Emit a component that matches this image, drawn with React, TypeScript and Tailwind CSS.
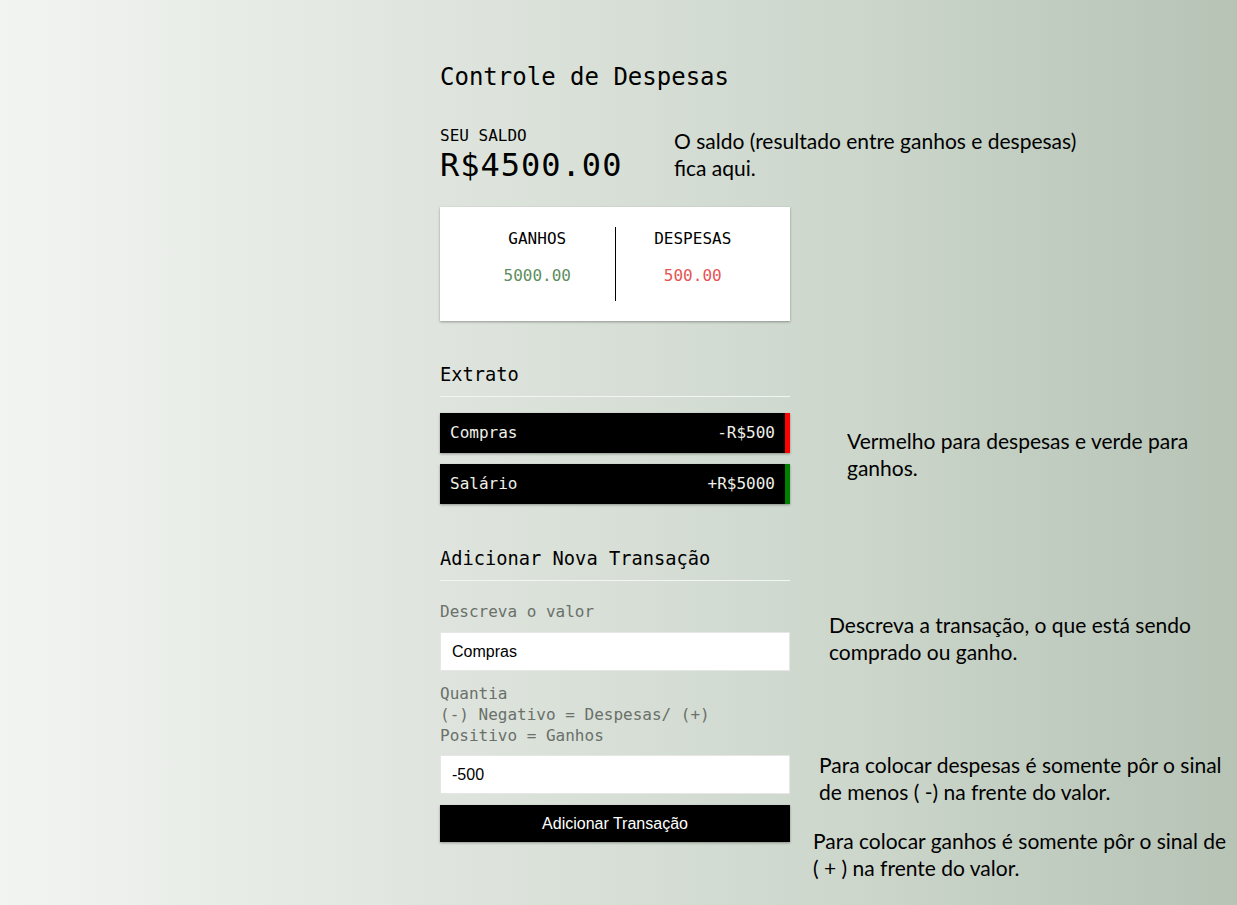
import React from "react";

const mono = { fontFamily: '"DejaVu Sans Mono", "Liberation Mono", monospace' };

export default function App() {
  return (
    <div className="relative min-h-[905px] w-full bg-[linear-gradient(to_right,#f2f4f1_0%,#dfe5de_35%,#ccd6cb_70%,#b6c3b5_100%)] text-black">
      <div className="flex justify-center pr-[7px]">
        <div className="w-[350px] pt-[62px] pb-[60px]" style={mono}>
          <h2 className="text-[24px] leading-[30px] font-normal">Controle de Despesas</h2>

          <div className="mt-[34px]">
            <h4 className="text-[16px] leading-[20px] uppercase">Seu saldo</h4>
            <h1 className="text-[32px] leading-[38px] tracking-[1px] font-medium">R$4500.00</h1>
          </div>

          <div className="mt-[23px] flex bg-white p-[20px] shadow-[0_1px_3px_rgba(0,0,0,0.12),0_1px_2px_rgba(0,0,0,0.24)]">
            <div className="flex-1 border-r border-black text-center">
              <h4 className="pt-[2px] text-[16px] leading-[20px] uppercase">Ganhos</h4>
              <p className="mt-[17px] mb-[15px] text-[16px] leading-[20px] text-[#5e8e5e]">5000.00</p>
            </div>
            <div className="flex-1 text-center">
              <h4 className="pt-[2px] text-[16px] leading-[20px] uppercase">Despesas</h4>
              <p className="mt-[17px] text-[16px] leading-[20px] text-[#e55454]">500.00</p>
            </div>
          </div>

          <h3 className="mt-[42px] border-b border-[#f3f5f2] pb-[9px] text-[18.72px] leading-[24px]">Extrato</h3>
          <ul className="mt-[16px] flex flex-col gap-[11px]">
            <li className="flex h-[40px] items-center justify-between border-r-[5px] border-[#ff0000] bg-black px-[10px] text-[16px] text-[#f0f0e8] shadow-[0_1px_3px_rgba(0,0,0,0.12),0_1px_2px_rgba(0,0,0,0.24)]">
              <span>Compras</span>
              <span>-R$500</span>
            </li>
            <li className="flex h-[40px] items-center justify-between border-r-[5px] border-[#008000] bg-black px-[10px] text-[16px] text-[#f0f0e8] shadow-[0_1px_3px_rgba(0,0,0,0.12),0_1px_2px_rgba(0,0,0,0.24)]">
              <span>Salário</span>
              <span>+R$5000</span>
            </li>
          </ul>

          <h3 className="mt-[43px] border-b border-[#f3f5f2] pb-[9px] text-[18.72px] leading-[24px]">Adicionar Nova Transação</h3>

          <div className="mt-[20px]">
            <label className="block text-[16px] leading-[21px] text-[#6a706a]">Descreva o valor</label>
            <input
              readOnly
              value="Compras"
              className="mt-[10px] block h-[39px] w-full border border-[#e6e6e6] bg-white px-[11px] text-[16px] outline-none font-['Liberation_Sans',Arial,sans-serif]"
            />
          </div>

          <div className="mt-[12px]">
            <label className="block text-[16px] leading-[21px] text-[#6a706a]">
              Quantia
              <br />
              (-) Negativo = Despesas/ (+)
              <br />
              Positivo = Ganhos
            </label>
            <input
              readOnly
              value="-500"
              className="mt-[9px] block h-[39px] w-full border border-[#e6e6e6] bg-white px-[11px] text-[16px] outline-none font-['Liberation_Sans',Arial,sans-serif]"
            />
          </div>

          <button className="mt-[11px] block h-[37px] w-full bg-black text-[16px] text-white shadow-[0_1px_3px_rgba(0,0,0,0.12),0_1px_2px_rgba(0,0,0,0.24)] font-['Liberation_Sans',Arial,sans-serif]">
            Adicionar Transação
          </button>
        </div>
      </div>

      <div className="pointer-events-none absolute inset-0 font-['Lato','Noto_Sans',sans-serif] text-[21px] leading-[27px] text-black">
        <p className="absolute left-[674px] top-[127px]">
          O saldo (resultado entre ganhos e despesas)
          <br />
          fica aqui.
        </p>
        <p className="absolute left-[847px] top-[427px]">
          Vermelho para despesas e verde para
          <br />
          ganhos.
        </p>
        <p className="absolute left-[829px] top-[611px]">
          Descreva a transação, o que está sendo
          <br />
          comprado ou ganho.
        </p>
        <p className="absolute left-[819px] top-[751px]">
          Para colocar despesas é somente pôr o sinal
          <br />
          de menos ( -) na frente do valor.
        </p>
        <p className="absolute left-[813px] top-[827px]">
          Para colocar ganhos é somente pôr o sinal de
          <br />( + ) na frente do valor.
        </p>
      </div>
    </div>
  );
}
